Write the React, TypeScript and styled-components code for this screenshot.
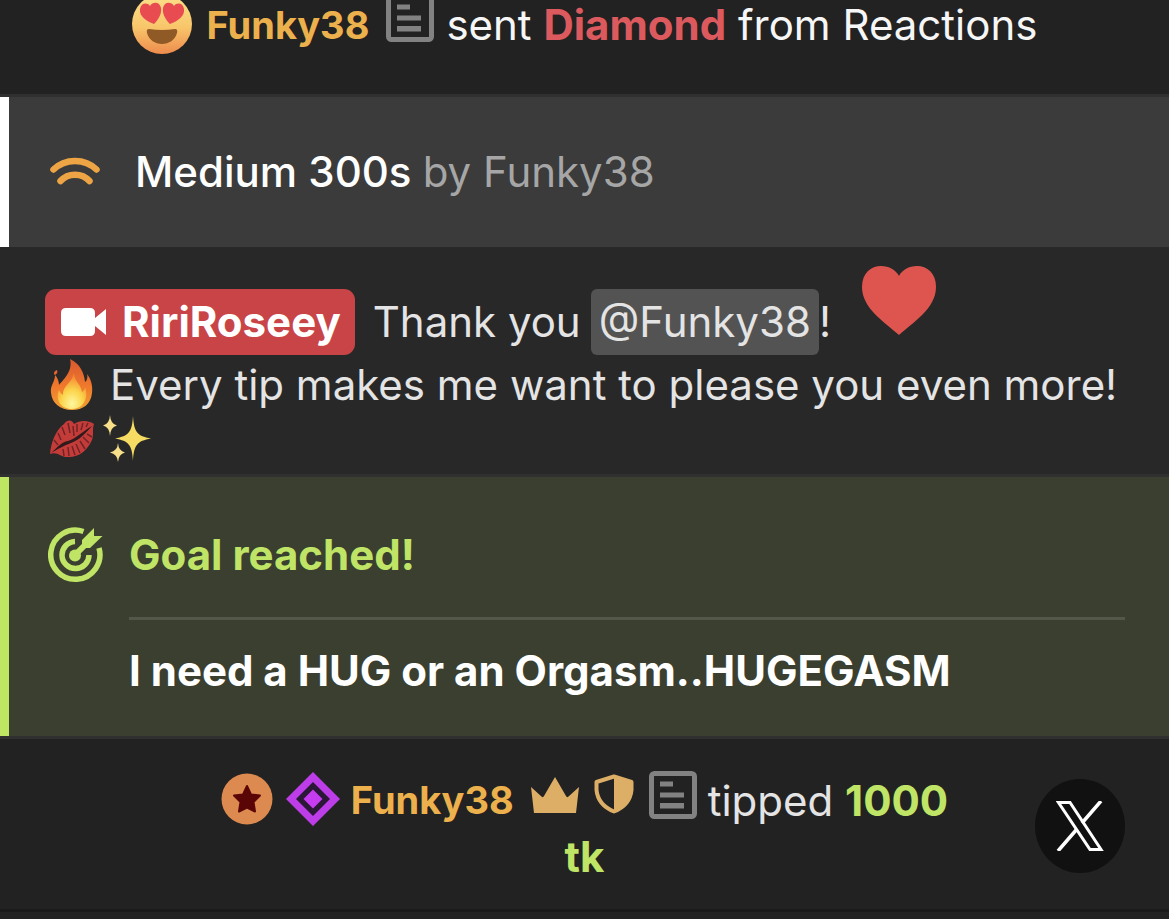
import React from "react";
import styled, { createGlobalStyle } from "styled-components";

const GlobalStyle = createGlobalStyle`
  *, *::before, *::after { box-sizing: border-box; }
  body {
    margin: 0;
    background: #222222;
    color: #e4e4e4;
    font-family: Inter, "Liberation Sans", sans-serif;
    font-size: 42px;
    line-height: 54px;
    overflow: hidden;
  }
`;

const Feed = styled.main`
  display: flex;
  flex-direction: column;
  min-height: 100vh;
`;

const Row = styled.article<{ $tone?: string; $accent?: string }>`
  position: relative;
  border-bottom: 3px solid #303030;
  background: ${(p) => p.$tone ?? "#222222"};
  ${(p) => p.$accent && `border-left: 9px solid ${p.$accent}; border-bottom-width: 0;`}
`;

const ReactionRow = styled(Row)`
  display: flex;
  justify-content: center;
  margin-top: -6px;
  padding-bottom: 38px;
  line-height: 62px;
  color: #f6f6f6;
  white-space: pre;
`;

const DeviceRow = styled(Row)`
  display: flex;
  align-items: center;
  gap: 35px;
  min-height: 150px;
  padding: 0 41px;
  font-weight: 500;
  color: #ffffff;
`;

const ChatRow = styled(Row)`
  padding: 42px 44px 11px 45px;
`;

const GoalRow = styled(Row)`
  display: grid;
  grid-template-columns: 55px 1fr;
  column-gap: 26px;
  padding: 50px 44px 38px 39px;
`;

const TipRow = styled(Row)`
  padding: 32px 44px 24px;
  border-top: 3px solid #303030;
  border-bottom-color: #1a1a1a;
  text-align: center;
`;

const TipText = styled.p`
  max-width: 760px;
  margin: 0 auto;
  line-height: 56px;
`;

const Name = styled.span`
  font-size: 38px;
  font-weight: 700;
  color: #ecb14c;
  vertical-align: 2px;
`;

const Gift = styled.strong`
  font-weight: 700;
  color: #dc5a5e;
`;

const Amount = styled.strong`
  font-weight: 700;
  color: #bfe466;
`;

const Muted = styled.span`
  font-weight: 400;
  color: #a6a6a6;
`;

const Line = styled.div<{ $height: number }>`
  display: flex;
  align-items: center;
  height: ${(p) => p.$height}px;
  white-space: nowrap;
`;

const Broadcaster = styled.span`
  display: inline-flex;
  align-items: center;
  gap: 15px;
  height: 66px;
  margin-right: 18px;
  padding: 0 14px 0 16px;
  border-radius: 11px;
  background: #c94447;
  color: #ffffff;
  font-weight: 700;
`;

const Mention = styled.span`
  height: 66px;
  margin-left: 10px;
  padding: 0 8px;
  border-radius: 6px;
  background: #535353;
  line-height: 66px;
`;

const GoalTitle = styled.h2`
  margin: 0;
  font-size: 42px;
  font-weight: 700;
  line-height: 56px;
  color: #bfe466;
`;

const GoalText = styled.p`
  grid-column: 2;
  margin: 34px 0 0;
  padding-top: 24px;
  border-top: 3px solid #53574a;
  font-weight: 700;
  line-height: 54px;
  color: #ffffff;
`;

const Icon = styled.svg<{ $before?: number; $after?: number; $drop?: number; $below?: number }>`
  flex: none;
  margin-left: ${(p) => p.$before ?? 0}px;
  margin-right: ${(p) => p.$after ?? 0}px;
  margin-bottom: ${(p) => p.$below ?? 0}px;
  vertical-align: ${(p) => -(p.$drop ?? 0)}px;
`;

const ShareLink = styled.a`
  position: absolute;
  top: 40px;
  right: 44px;
  display: grid;
  place-items: center;
  width: 90px;
  height: 94px;
  border-radius: 50%;
  background: #111111;
`;

type Gaps = { before?: number; after?: number; drop?: number };

const NoteIcon = ({ before, after, drop }: Gaps) => (
  <Icon width="48" height="48" viewBox="0 0 48 48" $before={before} $after={after} $drop={drop} aria-hidden>
    <rect x="2.5" y="2.5" width="43" height="43" rx="3" fill="none" stroke="#828282" strokeWidth="5" />
    <path d="M11 10.500h13v5H11zM11 21.500h24v5H11zM11 32h24v5.500H11z" fill="#828282" />
  </Icon>
);

const HeartEyes = () => (
  <Icon width="60" height="60" viewBox="0 0 60 60" $after={15} role="img" aria-label="heart eyes">
    <defs>
      <linearGradient id="face" x1="0" y1="0" x2="0" y2="1">
        <stop offset="0" stopColor="#fbe08a" />
        <stop offset="0.55" stopColor="#f8c66a" />
        <stop offset="1" stopColor="#ee8b4e" />
      </linearGradient>
    </defs>
    <circle cx="30" cy="30" r="30" fill="url(#face)" />
    <path d="M22 30C14 27 7 22 8 15C9 9 15 8 18 12C21 7 28 8 29 14C30 20 26 26 22 30Z" fill="#e84b50" />
    <path d="M38 30C46 27 53 22 52 15C51 9 45 8 42 12C39 7 32 8 31 14C30 20 34 26 38 30Z" fill="#e84b50" />
    <path d="M17 35Q30 37 43 35Q46 35 45 39C43 46 37 50 30 50C23 50 17 46 15 39Q14 35 17 35Z" fill="#8f5a25" />
  </Icon>
);

const WaveIcon = () => (
  <Icon width="50" height="30" viewBox="0 0 50 30" aria-hidden>
    <path
      d="M3.500 12.500C15 1 35 1 46.500 12.500M10.500 24C18 15.500 32 15.500 39.500 24"
      fill="none"
      stroke="#eca444"
      strokeWidth="6.500"
      strokeLinecap="round"
    />
  </Icon>
);

const CameraIcon = () => (
  <Icon width="46" height="30" viewBox="0 0 46 30" aria-hidden>
    <path d="M5 1H29Q34 1 34 6V11L45 2V28L34 19V24Q34 29 29 29H5Q0 29 0 24V6Q0 1 5 1Z" fill="#fff" />
  </Icon>
);

const HeartIcon = () => (
  <Icon width="76" height="70" viewBox="0 0 76 70" $before={30} $below={44} role="img" aria-label="heart">
    <path d="M38 70C25 58 1 44 1 22C1 8 10 1 20 1C28 1 35 5 38 11C41 5 48 1 56 1C66 1 75 8 75 22C75 44 51 58 38 70Z" fill="#de554f" />
  </Icon>
);

const FireIcon = () => (
  <Icon width="44" height="52" viewBox="0 0 44 52" $before={5} $after={16} role="img" aria-label="fire">
    <defs>
      <linearGradient id="flame" x1="0" y1="0" x2="0" y2="1">
        <stop offset="0" stopColor="#d9582f" />
        <stop offset="0.55" stopColor="#f07a2c" />
        <stop offset="1" stopColor="#f0a032" />
      </linearGradient>
      <radialGradient id="core" cx="0.5" cy="0.85" r="0.75">
        <stop offset="0" stopColor="#fff7a0" />
        <stop offset="0.5" stopColor="#fbd54c" />
        <stop offset="1" stopColor="#f58a35" />
      </radialGradient>
    </defs>
    <path d="M20 0C30 5 34 13 35 23C37 22 38 18 37 15C41 20 43 27 42 34C41 45 33 51 22 51C10 51 2 44 1 34C0 26 5 23 5 16C7 18 9 22 9 26C14 20 23 12 20 0Z" fill="url(#flame)" />
    <path d="M5 16C3 15 4 12 7 11C8 13 7 15 5 16Z" fill="#e2642f" />
    <path d="M24 14C24 22 31 25 32 33C34 32 35 30 35 28C39 38 34 50 22 50C10 50 5 40 9 31C10 33 11 35 13 36C12 27 22 24 24 14Z" fill="url(#core)" />
  </Icon>
);

const KissIcon = () => (
  <Icon width="46" height="42" viewBox="0 0 46 42" $before={4} $after={7} role="img" aria-label="kiss mark">
    <path d="M1 36C2 25 6 13 15 6C19 1 23 2 25 6C32 1 41 3 45 6C43 11 45 16 43 22C38 33 29 40 18 39C12 39 8 33 1 36Z" fill="#c43c3a" />
    <path d="M2 35C9 29 12 24 19 23C26 21 30 16 43 8C35 17 30 22 22 25C14 28 9 31 2 35Z" fill="#32191b" />
    <path
      d="M13 9L16 17M19 5L21 15M24 8L25 18M28 6L28 14M34 5L32 12M39 5L37 9M9 15L12 22M5 22L9 27M14 31L15 38M19 29L20 38M23 28L26 37M27 26L31 35M31 23L36 31M34 19L40 25M38 16L43 19"
      stroke="#6f2425"
      strokeWidth="1.500"
    />
  </Icon>
);

const SparklesIcon = () => (
  <Icon width="50" height="48" viewBox="0 0 50 48" role="img" aria-label="sparkles">
    <path d="M31 1C32 17 35 21 49 23.500C35 26 32 30 31 46C30 30 27 26 13 23.500C27 21 30 17 31 1Z" fill="#f6dc62" />
    <path d="M8 0Q8.500 9 15 10.500Q8.500 12 8 21Q7.500 12 1 10.500Q7.500 9 8 0Z" fill="#f8e08a" />
    <path d="M16 28Q16.500 36 23 37.500Q16.500 39 16 47Q15.500 39 8 37.500Q15.500 36 16 28Z" fill="#f8e08a" />
  </Icon>
);

const TargetIcon = () => (
  <Icon width="55" height="56" viewBox="0 0 55 56" aria-hidden>
    <g fill="none" stroke="#bfe466" strokeWidth="5.500">
      <path d="M35.500 4.500A24.600 24.600 0 1 0 51 21" />
      <path d="M27 14.500A13.500 13.500 0 1 0 41 28" />
    </g>
    <circle cx="27" cy="28.500" r="6" fill="#bfe466" />
    <path d="M27 28L38 17" stroke="#bfe466" strokeWidth="6" />
    <path d="M34 21V13L46 1V9H54.500L42 21Z" fill="#bfe466" />
  </Icon>
);

const StarBadge = () => (
  <Icon width="52" height="52" viewBox="0 0 52 52" $after={13} $drop={9} aria-hidden>
    <circle cx="26" cy="26" r="25.500" fill="#dc8a50" />
    <path d="M26 13L30 21.500L39 22.500L32.500 29L34 38.500L26 34.500L18 38.500L19.500 29L13 22.500L22 21.500Z" fill="#5a0606" stroke="#5a0606" strokeWidth="2" strokeLinejoin="round" />
  </Icon>
);

const DiamondBadge = () => (
  <Icon width="54" height="54" viewBox="0 0 54 54" $after={11} $drop={10} aria-hidden>
    <path d="M27 0L54 27L27 54L0 27Z" fill="#bd3ee8" />
    <path d="M27 10L44 27L27 44L10 27Z" fill="#2b1736" />
    <path d="M27 17.500L36.500 27L27 36.500L17.500 27Z" fill="#c63cf0" />
  </Icon>
);

const CrownBadge = () => (
  <Icon width="48" height="36" viewBox="0 0 48 36" $before={17} $after={15} $drop={-3} aria-hidden>
    <path d="M24 0L35 19Q36 21 37.500 19.500L48 10L45 36H3L0 10L10.500 19.500Q12 21 13 19Z" fill="#dcae66" />
  </Icon>
);

const ShieldBadge = () => (
  <Icon width="40" height="40" viewBox="0 0 40 40" $after={15} $drop={-2} aria-hidden>
    <path d="M20 2.500L37.500 8V16Q36 31 20 37.500Q4 31 2.500 16V8Z" fill="none" stroke="#dcae66" strokeWidth="4" strokeLinejoin="round" />
    <path d="M20 2L38 8V16Q36 32 20 38Z" fill="#dcae66" />
  </Icon>
);

const XLogo = () => (
  <svg width="48" height="50" viewBox="0 0 48 50" aria-hidden>
    <path d="M2.500 1.500H14L45 48.500H34Z" fill="none" stroke="#fff" strokeWidth="3" />
    <path d="M45 0L26 22M21 28L2 50" stroke="#fff" strokeWidth="3.500" />
  </svg>
);

export default function App() {
  return (
    <>
      <GlobalStyle />
      <Feed>
        <ReactionRow>
          <HeartEyes />
          <Name>Funky38</Name>
          <NoteIcon before={17} after={12} />
          <span>
            sent <Gift>Diamond</Gift> from Reactions
          </span>
        </ReactionRow>

        <DeviceRow $tone="#3b3b3b" $accent="#ffffff">
          <WaveIcon />
          <span>
            Medium 300s <Muted>by Funky38</Muted>
          </span>
        </DeviceRow>

        <ChatRow $tone="#282828">
          <Line $height={66}>
            <Broadcaster>
              <CameraIcon />
              RiriRoseey
            </Broadcaster>
            Thank you <Mention>@Funky38</Mention>!
            <HeartIcon />
          </Line>
          <Line $height={60}>
            <FireIcon />
            Every tip makes me want to please you even more!
          </Line>
          <Line $height={48}>
            <KissIcon />
            <SparklesIcon />
          </Line>
        </ChatRow>

        <GoalRow $tone="#3b3f30" $accent="#bfe663">
          <TargetIcon />
          <GoalTitle>Goal reached!</GoalTitle>
          <GoalText>I need a HUG or an Orgasm..HUGEGASM</GoalText>
        </GoalRow>

        <TipRow>
          <TipText>
            <StarBadge />
            <DiamondBadge />
            <Name>Funky38</Name>
            <CrownBadge />
            <ShieldBadge />
            <NoteIcon after={11} drop={3} />
            tipped <Amount>1000</Amount> <Amount>tk</Amount>
          </TipText>
          <ShareLink href="#x" aria-label="X">
            <XLogo />
          </ShareLink>
        </TipRow>
      </Feed>
    </>
  );
}
